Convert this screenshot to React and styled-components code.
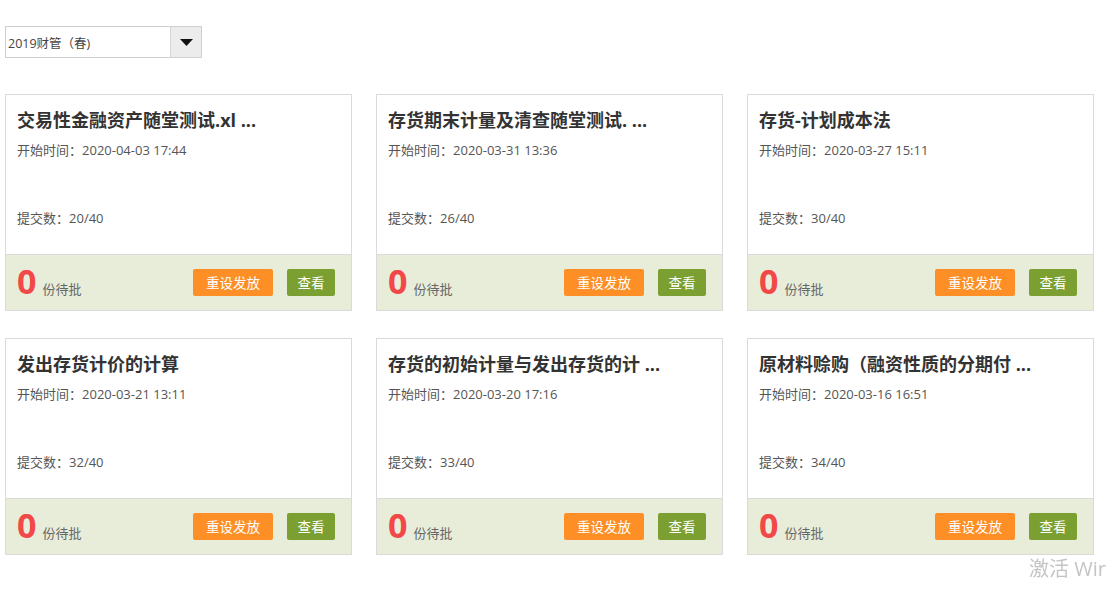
import React from "react";
import styled, { createGlobalStyle } from "styled-components";

const Global = createGlobalStyle`
  html, body { margin: 0; padding: 0; background: #fff; overflow: hidden; }
  body { font-family: "Open Sans", "Noto Sans CJK SC", sans-serif; color: #333; }
  * { box-sizing: border-box; }
`;

const Page = styled.div`
  padding: 26px 0 0 5px;
  width: 1116px;
  height: 593px;
`;

const Select = styled.div`
  display: flex;
  width: 197px;
  height: 32px;
  border: 1px solid #cfcfcf;
  background: #fff;
`;

const SelectText = styled.div`
  flex: 1;
  display: flex;
  align-items: center;
  padding-left: 2px;
  font-size: 12.5px;
  color: #444;
`;

const SelectArrow = styled.div`
  width: 31px;
  display: flex;
  align-items: center;
  justify-content: center;
  background: #ececec;
  border-left: 1px solid #d6d6d6;
`;

const Grid = styled.div`
  margin-top: 36px;
  display: grid;
  grid-template-columns: repeat(3, 347px);
  column-gap: 24px;
  row-gap: 27px;
`;

const Card = styled.div`
  border: 1px solid #dadada;
  background: #fff;
`;

const Body = styled.div`
  height: 159px;
  display: flex;
  flex-direction: column;
  padding: 13px 11px 26px;
`;

const Title = styled.div`
  font-size: 18px;
  font-weight: 700;
  line-height: 24px;
  color: #333;
  white-space: nowrap;
`;

const Meta = styled.div`
  font-size: 13px;
  line-height: 20px;
  color: #555;
  margin-top: ${(p) => (p.$bottom ? "auto" : "8px")};
`;

const Footer = styled.div`
  height: 56px;
  border-top: 1px solid #dadada;
  background: #e8edda;
  display: flex;
  align-items: center;
  padding: 0 16px 0 11px;
`;

const Pending = styled.div`
  display: flex;
  align-items: baseline;
  gap: 6px;
  flex: 1;
  margin-top: -3px;
`;

const Count = styled.span`
  font-size: 34px;
  font-weight: 700;
  color: #f24848;
  line-height: 1;
`;

const PendingLabel = styled.span`
  font-size: 13px;
  color: #666;
`;

const Button = styled.button`
  height: 27px;
  padding: 0;
  width: ${(p) => (p.$primary ? "80px" : "48px")};
  margin-left: ${(p) => (p.$primary ? "0" : "14px")};
  background: ${(p) => (p.$primary ? "#fd8f26" : "#7c9f31")};
  color: #fff;
  border: none;
  border-radius: 2px;
  font-family: "Noto Sans CJK SC", sans-serif;
  font-size: 13.5px;
  line-height: 27px;
`;

const Watermark = styled.div`
  position: fixed;
  left: 1029px;
  top: 553px;
  font-size: 20px;
  color: #c4c4c4;
  white-space: nowrap;
  font-family: "Open Sans", "Noto Sans CJK SC", sans-serif;
`;

const items = [
  { title: "交易性金融资产随堂测试.xl ...", time: "2020-04-03 17:44", sub: "20/40" },
  { title: "存货期末计量及清查随堂测试. ...", time: "2020-03-31 13:36", sub: "26/40" },
  { title: "存货-计划成本法", time: "2020-03-27 15:11", sub: "30/40" },
  { title: "发出存货计价的计算", time: "2020-03-21 13:11", sub: "32/40" },
  { title: "存货的初始计量与发出存货的计 ...", time: "2020-03-20 17:16", sub: "33/40" },
  { title: "原材料赊购（融资性质的分期付 ...", time: "2020-03-16 16:51", sub: "34/40" },
];

export default function App() {
  return (
    <>
      <Global />
      <Page>
        <Select>
          <SelectText>2019财管（春)</SelectText>
          <SelectArrow>
            <svg width="13" height="7" viewBox="0 0 13 7">
              <path d="M0 0 L13 0 L6.5 7 Z" fill="#111" />
            </svg>
          </SelectArrow>
        </Select>
        <Grid>
          {items.map((it, i) => (
            <Card key={i}>
              <Body>
                <Title>{it.title}</Title>
                <Meta>开始时间：{it.time}</Meta>
                <Meta $bottom>提交数：{it.sub}</Meta>
              </Body>
              <Footer>
                <Pending>
                  <Count>0</Count>
                  <PendingLabel>份待批</PendingLabel>
                </Pending>
                <Button $primary>重设发放</Button>
                <Button>查看</Button>
              </Footer>
            </Card>
          ))}
        </Grid>
      </Page>
      <Watermark>激活 Wir</Watermark>
    </>
  );
}
